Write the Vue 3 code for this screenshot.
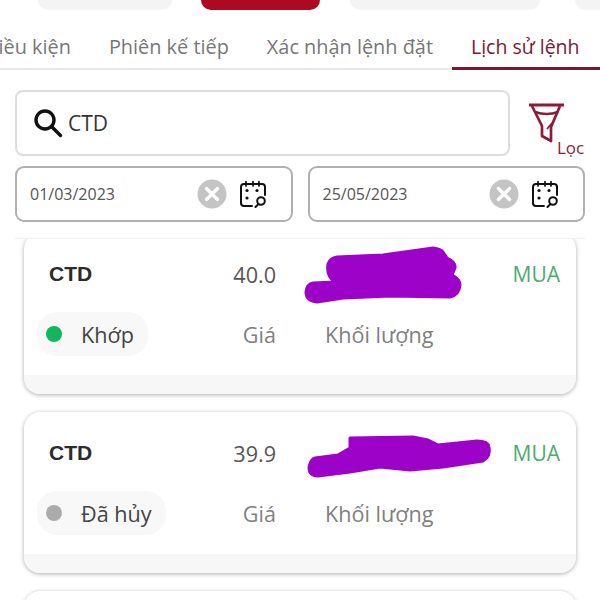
<script setup>
const pills = ['a', 'b', 'c', 'd']
const tabs = ['Điều kiện', 'Phiên kế tiếp', 'Xác nhận lệnh đặt', 'Lịch sử lệnh']
const dates = ['01/03/2023', '25/05/2023']
const orders = [
  { code: 'CTD', price: '40.0', status: 'Khớp', dot: '#12b65c', side: 'MUA' },
  { code: 'CTD', price: '39.9', status: 'Đã hủy', dot: '#ababab', side: 'MUA' },
]
</script>

<template>
  <div class="page">
    <div class="pills">
      <span v-for="p in pills" :key="p" class="pill" :class="p"></span>
    </div>

    <div class="tabs">
      <div v-for="(t, i) in tabs" :key="t" class="tab" :class="{ active: i === 3 }">{{ t }}</div>
    </div>

    <div class="search-row">
      <div class="search">
        <svg width="30" height="30" viewBox="0 0 30 30" fill="none" stroke="#111" stroke-width="3.4" stroke-linecap="round">
          <circle cx="12" cy="12" r="9" />
          <path d="M18.5 18.5 L27.5 27.5" />
        </svg>
        <span>CTD</span>
      </div>
      <div class="filter">
        <svg width="36" height="40" viewBox="0 0 36 40" fill="none" stroke="#8c1c3a" stroke-width="2.7" stroke-linejoin="round">
          <path d="M0 2 H35" stroke-width="3" />
          <path d="M3 3 L13 23 V33 L22 38 V24 L31 3" />
          <path d="M6 9 Q18 13 29 9" />
          <path d="M18 26 L23 20" stroke-width="1.8" />
        </svg>
        <span>Lọc</span>
      </div>
    </div>

    <div class="date-row">
      <div v-for="d in dates" :key="d" class="date">
        <span class="date-text">{{ d }}</span>
        <svg class="clear" width="30" height="30" viewBox="0 0 30 30">
          <circle cx="15" cy="15" r="14.5" fill="#c4c4c4" />
          <path d="M9.5 9.5 L20.5 20.5 M20.5 9.5 L9.5 20.5" stroke="#fff" stroke-width="3.4" stroke-linecap="round" />
        </svg>
        <svg width="28" height="28" viewBox="0 0 28 28" fill="none" stroke="#111" stroke-width="2" stroke-linecap="round">
          <path d="M13 26 H5 Q2 26 2 23 V7 Q2 4 5 4 H23 Q26 4 26 7 V15" />
          <path d="M7 1.5 V6 M14 1.5 V6 M20 1.5 V6" stroke-width="1.7" />
          <circle cx="8" cy="10.5" r="1.6" fill="#111" stroke="none" />
          <circle cx="18" cy="10.5" r="1.6" fill="#111" stroke="none" />
          <circle cx="8" cy="18" r="1.6" fill="#111" stroke="none" />
          <circle cx="22" cy="21" r="3.8" />
          <path d="M19 24.5 L16.5 27" />
        </svg>
      </div>
    </div>

    <div class="list">
      <div v-for="(o, i) in orders" :key="i" class="card">
        <div class="grid">
          <span class="code">{{ o.code }}</span>
          <span class="num">{{ o.price }}</span>
          <span class="vol"></span>
          <span class="side">{{ o.side }}</span>
          <div class="status">
            <i class="dot" :style="{ background: o.dot }"></i>
            <span>{{ o.status }}</span>
          </div>
          <span class="num label">Giá</span>
          <span class="vol label">Khối lượng</span>
        </div>
        <div class="strip"></div>
      </div>
      <div class="card"></div>
    </div>

    <!-- nét bôi che số liệu -->
    <svg class="scribble" width="600" height="600" viewBox="0 0 600 600" fill="#9d02c9" stroke="#9d02c9" stroke-width="3" stroke-linejoin="round">
      <path d="M306 292 Q307 284 313 283 L335 282 Q326 276 328 264 Q330 258 337 257 L383 255 L433 248 Q441 249 443 252 L447 258 Q456 262 455 268 L452 275 Q460 279 460 285 Q459 295 450 297 L390 296 L343 298 L317 302 Q306 301 306 292 Z" />
      <path d="M309 467 Q311 459 315 458 L338 455 L350 448 V438 L413 437 L428 440 L438 445 L477 441 Q488 441 489 447 Q491 456 483 461 L443 467 L410 470 L380 467 L350 472 L318 476 Q309 476 309 467 Z" />
    </svg>
  </div>
</template>

<style scoped>
.page {
  position: relative;
  width: 600px;
  height: 600px;
  overflow: hidden;
  background: #fff;
  font-family: "Open Sans", "Noto Sans", sans-serif;
  color: #444;
}

.pills {
  display: flex;
  height: 10px;
  padding-left: 38px;
}
.pill {
  height: 10px;
  background: #f4f4f4;
  border-radius: 0 0 20px 20px;
  flex: none;
}
.pill.a { width: 134px; margin-right: 29px; }
.pill.b { width: 119px; margin-right: 30px; background: #ad0a22; }
.pill.c { width: 190px; margin-right: 35px; }
.pill.d { width: 60px; }

.tabs {
  display: flex;
  justify-content: flex-end;
  height: 60px;
  border-bottom: 2px solid #e8e8e8;
  box-sizing: border-box;
  white-space: nowrap;
}
.tab {
  flex: none;
  padding: 22px 19px 0;
  font-size: 19.9px;
  line-height: 30px;
  color: #777;
}
.tab.active {
  height: 60px;
  width: 148px;
  box-sizing: border-box;
  padding-right: 0;
  color: #7c1733;
  font-weight: 500;
  font-size: 19.5px;
  border-bottom: 3px solid #7c1733;
}

.search-row {
  display: flex;
  margin-top: 20px;
  padding-left: 15px;
}
.search {
  display: flex;
  align-items: center;
  gap: 5px;
  width: 495px;
  height: 66px;
  box-sizing: border-box;
  padding-left: 16px;
  border: 2px solid #ddd;
  border-radius: 8px;
  font-size: 21px;
  color: #333;
}
.search svg { flex: none; }

.filter {
  width: 70px;
  margin-left: 19px;
  padding-top: 13px;
  display: flex;
  flex-direction: column;
  color: #8c1c3a;
  font-size: 17px;
  line-height: 16px;
}
.filter span { margin: -3px 0 0 28px; }

.date-row {
  display: flex;
  gap: 15px;
  margin-top: 10px;
  padding: 0 15px;
}
.date {
  flex: 1;
  display: flex;
  align-items: center;
  height: 56px;
  box-sizing: border-box;
  padding: 0 24px 0 13px;
  border: 2px solid #b0b0b0;
  border-radius: 9px;
}
.date-text {
  flex: 1;
  font-size: 16px;
  color: #555;
}
.clear { margin-right: 12px; }

.list {
  margin: 16px 15px 0;
  padding: 0 9px;
  height: 362px;
  overflow: hidden;
  border-top: 1px solid #f0f0f0;
  box-sizing: border-box;
}
.card {
  position: relative;
  height: 161px;
  margin: -6px 0 18px;
  border-radius: 16px;
  overflow: hidden;
  background: #fff;
  box-shadow: 0 1px 4px rgba(0, 0, 0, 0.32);
}
.card + .card { margin-top: 0; }

.grid {
  display: grid;
  grid-template-columns: 189px 50px 1fr auto;
  grid-template-rows: 42px 44px;
  row-gap: 17px;
  align-items: center;
  height: 142px;
  box-sizing: border-box;
  padding: 20px 16px 0 13px;
  font-size: 21.6px;
}
.code {
  margin-left: 12px;
  font-family: "Liberation Sans", Arial, sans-serif;
  font-weight: 700;
  font-size: 21px;
  color: #2b2b2b;
}
.num {
  justify-self: end;
  color: #555;
}
.vol { padding-left: 49px; }
.label { color: #808080; }
.side { color: #4cab6e; font-size: 21px; }

.status {
  grid-column: 1;
  justify-self: start;
  display: flex;
  align-items: center;
  gap: 19px;
  height: 44px;
  padding: 0 14px 0 9px;
  border-radius: 20px;
  background: #f8f8f8;
  color: #444;
}
.dot {
  width: 16px;
  height: 16px;
  border-radius: 50%;
}
.strip {
  height: 19px;
  background: #f7f7f7;
}

.scribble {
  position: absolute;
  left: 0;
  top: 0;
  pointer-events: none;
}
</style>
